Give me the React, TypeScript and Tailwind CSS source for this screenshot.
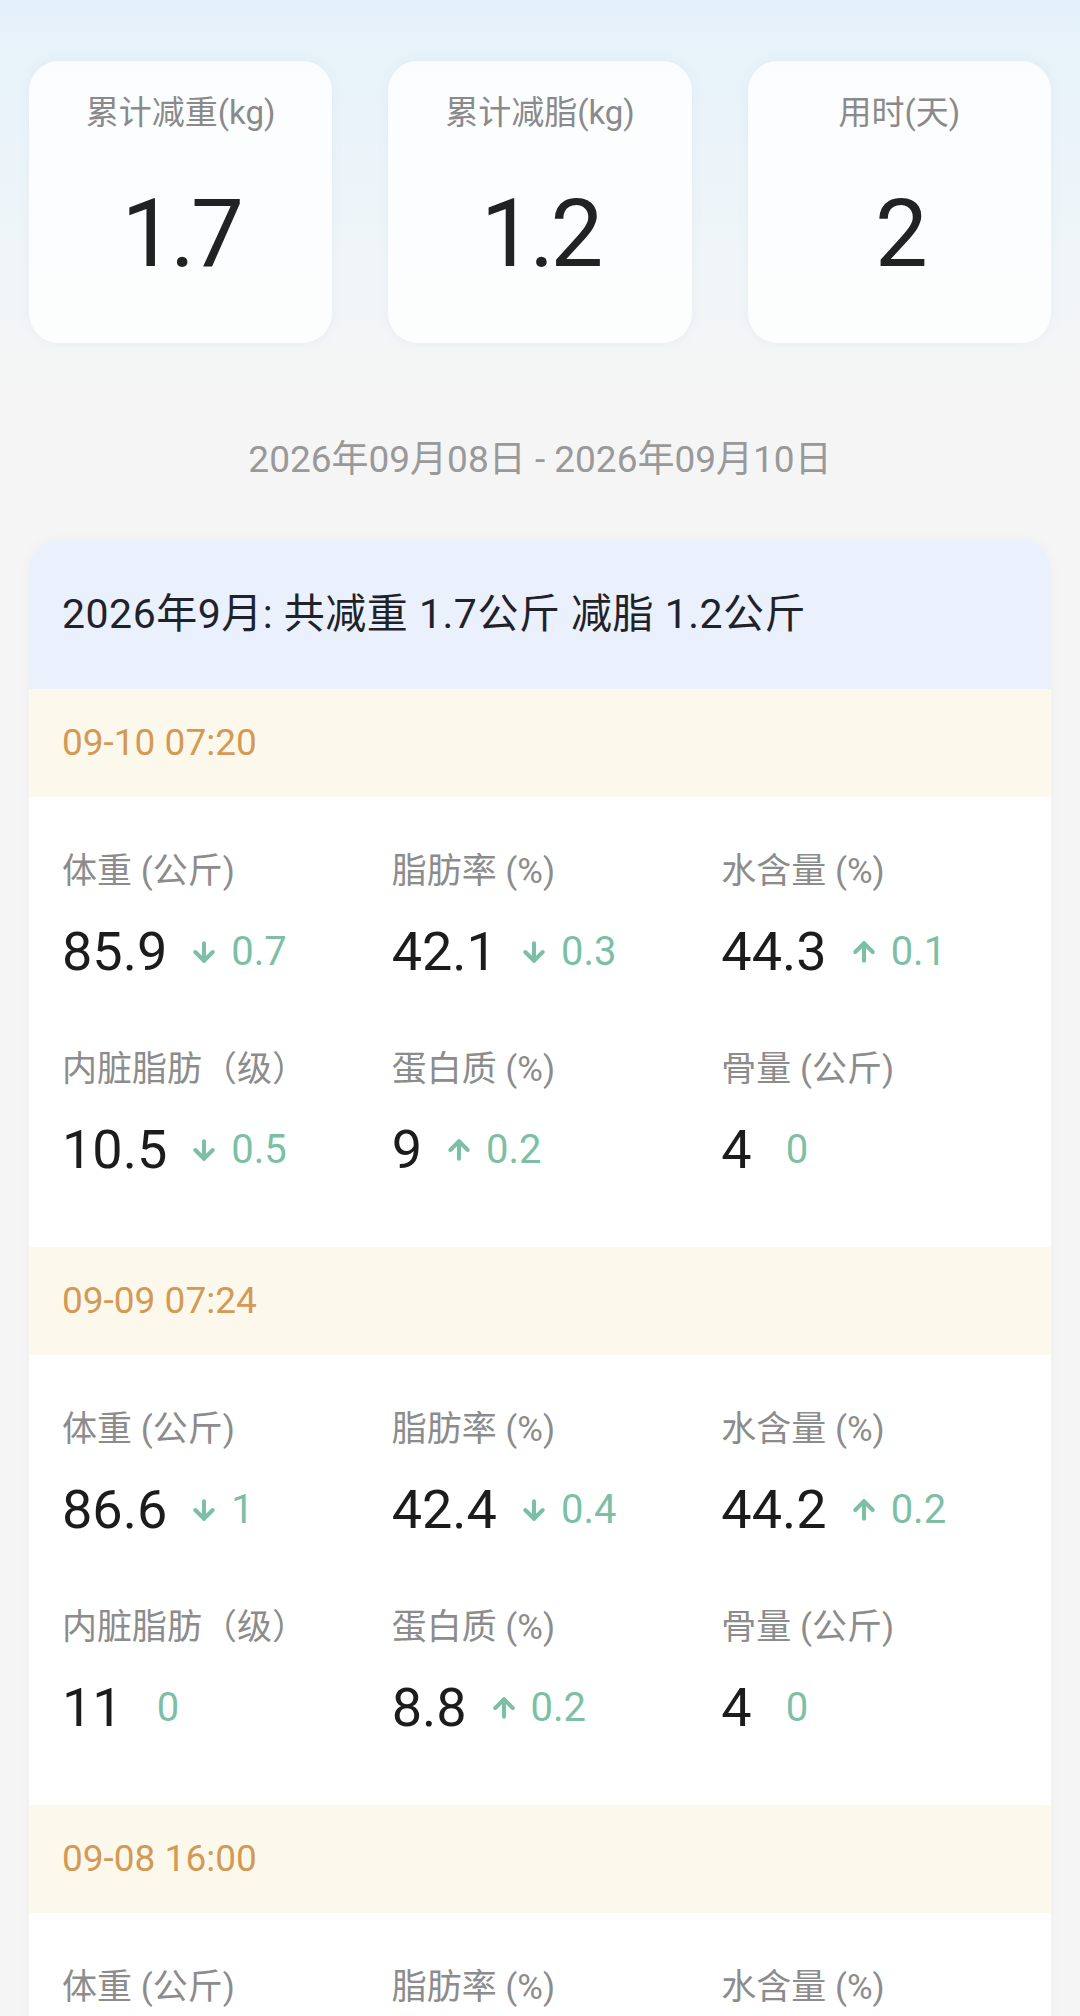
import { ArrowDown, ArrowUp } from "lucide-react";

type Metric = { label: string; value: string; delta: string; dir: "up" | "down" | "none" };
type Record = { time: string; metrics: Metric[] };

const records: Record[] = [
  {
    time: "09-10 07:20",
    metrics: [
      { label: "体重 (公斤)", value: "85.9", delta: "0.7", dir: "down" },
      { label: "脂肪率 (%)", value: "42.1", delta: "0.3", dir: "down" },
      { label: "水含量 (%)", value: "44.3", delta: "0.1", dir: "up" },
      { label: "内脏脂肪（级）", value: "10.5", delta: "0.5", dir: "down" },
      { label: "蛋白质 (%)", value: "9", delta: "0.2", dir: "up" },
      { label: "骨量 (公斤)", value: "4", delta: "0", dir: "none" },
    ],
  },
  {
    time: "09-09 07:24",
    metrics: [
      { label: "体重 (公斤)", value: "86.6", delta: "1", dir: "down" },
      { label: "脂肪率 (%)", value: "42.4", delta: "0.4", dir: "down" },
      { label: "水含量 (%)", value: "44.2", delta: "0.2", dir: "up" },
      { label: "内脏脂肪（级）", value: "11", delta: "0", dir: "none" },
      { label: "蛋白质 (%)", value: "8.8", delta: "0.2", dir: "up" },
      { label: "骨量 (公斤)", value: "4", delta: "0", dir: "none" },
    ],
  },
  {
    time: "09-08 16:00",
    metrics: [
      { label: "体重 (公斤)", value: "87.6", delta: "0", dir: "none" },
      { label: "脂肪率 (%)", value: "42.8", delta: "0", dir: "none" },
      { label: "水含量 (%)", value: "44", delta: "0", dir: "none" },
      { label: "内脏脂肪（级）", value: "11", delta: "0", dir: "none" },
      { label: "蛋白质 (%)", value: "8.6", delta: "0", dir: "none" },
      { label: "骨量 (公斤)", value: "4", delta: "0", dir: "none" },
    ],
  },
];

const font = { fontFamily: 'Roboto, "Noto Sans CJK SC", sans-serif' };

export default function App() {
  return (
    <div
      className="h-[2016px] overflow-hidden bg-[linear-gradient(to_bottom,#e5f1fa_0px,#eef5f9_220px,#f5f5f5_380px,#f5f5f5_100%)] px-[29px] pt-[61px]"
      style={font}
    >
      {/* Stats */}
      <div className="grid grid-cols-3 gap-[56px]">
        <StatCard label="累计减重(kg)" value="1.7" />
        <StatCard label="累计减脂(kg)" value="1.2" />
        <StatCard label="用时(天)" value="2" />
      </div>

      <div className="mt-[94px] text-center text-[37px] leading-[46px] text-[#999999]">
        2026年09月08日 - 2026年09月10日
      </div>

      {/* Month card */}
      <div className="mt-[57px] overflow-hidden rounded-t-[28px] bg-white shadow-[0_0_12px_rgba(0,0,0,0.03)]">
        <div className="flex h-[149px] items-center bg-[#eaf0fc] pl-[33px] text-[41px] tracking-[0.5px] text-[#1f2329]">
          2026年9月: 共减重 1.7公斤 减脂 1.2公斤
        </div>
        {records.map((r) => (
          <RecordBlock key={r.time} record={r} />
        ))}
      </div>
    </div>
  );
}

function StatCard({ label, value }: { label: string; value: string }) {
  return (
    <div className="flex h-[282px] flex-col items-center rounded-[30px] bg-white/80 shadow-[0_0_10px_rgba(200,215,230,0.25)]">
      <div className="mt-[32px] text-[33px] leading-[40px] text-[#8a8a8a]">{label}</div>
      <div className="mt-[46px] text-[94px] leading-[110px] tracking-[-4px] text-[#222222]">{value}</div>
    </div>
  );
}

function RecordBlock({ record }: { record: Record }) {
  return (
    <div>
      <div className="flex h-[108px] items-center bg-[#fcf9ec] pl-[33px] text-[37px] text-[#d49a55]">
        {record.time}
      </div>
      <div className="grid grid-cols-3 gap-y-[66px] pb-[67px] pl-[33px] pt-[53px]">
        {record.metrics.map((m) => (
          <div key={m.label}>
            <div className="text-[35px] leading-[44px] text-[#8c8c8c]">{m.label}</div>
            <div className="mt-[28px] flex items-center">
              <span className="text-[54px] leading-[60px] text-[#1c1c1c]">{m.value}</span>
              <span className="ml-[22px] flex items-center text-[40px] leading-[60px] text-[#7dbfa5]">
                {m.dir === "down" && <ArrowDown size={30} strokeWidth={3.2} className="mr-[12px]" />}
                {m.dir === "up" && <ArrowUp size={30} strokeWidth={3.2} className="mr-[12px]" />}
                {m.dir === "none" && <span className="w-[12px]" />}
                {m.delta}
              </span>
            </div>
          </div>
        ))}
      </div>
    </div>
  );
}
